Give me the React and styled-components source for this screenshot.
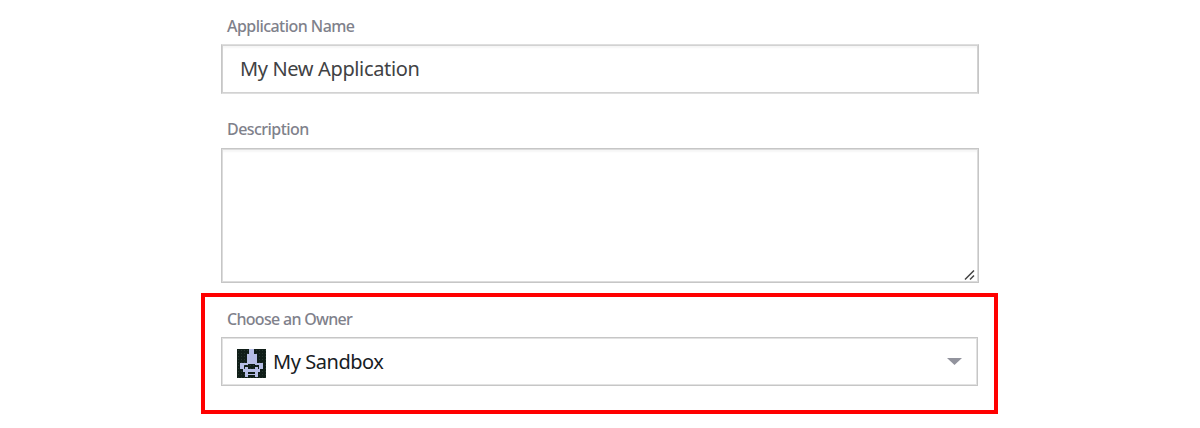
import React from "react";
import styled, { createGlobalStyle } from "styled-components";

const GlobalStyle = createGlobalStyle`
  * {
    box-sizing: border-box;
  }
  body {
    margin: 0;
    background: #fff;
    font-family: "Noto Sans", "Open Sans", sans-serif;
  }
`;

const Form = styled.form`
  width: 797px;
  margin-left: 201px;
  padding-top: 14px;
`;

const Field = styled.div`
  height: ${(props) => props.$height}px;
  padding: 0 19px 0 20px;
`;

const Label = styled.label`
  display: block;
  height: 22px;
  margin: 0 0 8px 6px;
  color: #7f818b;
  font-size: 16px;
  font-weight: 500;
  line-height: ${(props) => props.$line || 24}px;
  white-space: nowrap;
  letter-spacing: ${(props) => props.$spacing || -0.55}px;
`;

const Input = styled.input`
  display: block;
  width: 100%;
  height: 50px;
  padding: 0 18px 2px;
  border: 1px solid #c6c6c6;
  border-top-color: #dedede;
  border-bottom-color: #dedede;
  border-radius: 0;
  outline: none;
  box-shadow: inset 0 0 0 1px #d2d2d2, inset 0 3px 2px #f6f6f6;
  color: #414244;
  font-family: inherit;
  font-size: 20px;
  letter-spacing: -0.36px;
`;

const TextBox = styled.div`
  display: flex;
  align-items: flex-end;
  justify-content: flex-end;
  height: 135px;
  padding: 0 3px 1px 0;
  border: 1px solid #c6c6c6;
  box-shadow: inset 0 0 0 1px #dcdcdc, inset 0 3px 2px #f6f6f6;
`;

const Owner = styled.section`
  height: 121px;
  padding: 10px 16px 0;
  border: 4px solid #f00;
`;

const Select = styled.div`
  display: flex;
  align-items: center;
  width: 757px;
  height: 49px;
  padding: 0 15px 0 15px;
  border: 1px solid #c6c6c6;
  box-shadow: inset 0 0 0 1px #e2e2e2;
`;

const SelectText = styled.span`
  flex: 1;
  margin-left: 7px;
  color: #17201f;
  font-size: 20px;
  line-height: 28px;
  letter-spacing: -0.45px;
`;

const AvatarIcon = styled.svg`
  margin-top: 3px;
`;

const Avatar = () => (
  <AvatarIcon width="29" height="29" viewBox="0 0 29 29">
    <defs>
      <pattern id="dots" width="3" height="3" patternUnits="userSpaceOnUse">
        <path fill="#26372f" d="M1 1h1v1H1z" />
      </pattern>
    </defs>
    <path fill="#101e18" d="M0 0h29v29H0z" />
    <path fill="url(#dots)" d="M0 0h29v29H0z" />
    <path
      fill="#b6bee5"
      d="M12 0h5v5h3v9h6v6h-4v-4h-4v-1h-7v1H7v4H3v-6h7V5h2z"
    />
    <path
      fill="#b6bee5"
      d="M8 18h3v2h7v-2h3v2h2v3h-2v5h-3v-5h-7v5H8v-5H6v-3h2z"
    />
    <path fill="#b6bee5" d="M11 25h7v1h-7z" />
  </AvatarIcon>
);

const Grip = () => (
  <svg width="11" height="11" viewBox="0 0 11 11">
    <path d="M1 9.5L10 0.5M6 9.5L10 5.5" fill="none" stroke="#444" strokeWidth="1.5" />
  </svg>
);

const Caret = () => (
  <svg width="15" height="8" viewBox="0 0 15 8">
    <path d="M0 0h15L7.5 7z" fill="#92939d" />
  </svg>
);

export default function App() {
  return (
    <>
      <GlobalStyle />
      <Form>
        <Field $height={104}>
          <Label htmlFor="name">Application Name</Label>
          <Input id="name" defaultValue="My New Application" />
        </Field>
        <Field $height={175}>
          <Label $line={22}>Description</Label>
          <TextBox>
            <Grip />
          </TextBox>
        </Field>
        <Owner>
          <Label $spacing={-0.7}>Choose an Owner</Label>
          <Select>
            <Avatar />
            <SelectText>My Sandbox</SelectText>
            <Caret />
          </Select>
        </Owner>
      </Form>
    </>
  );
}
